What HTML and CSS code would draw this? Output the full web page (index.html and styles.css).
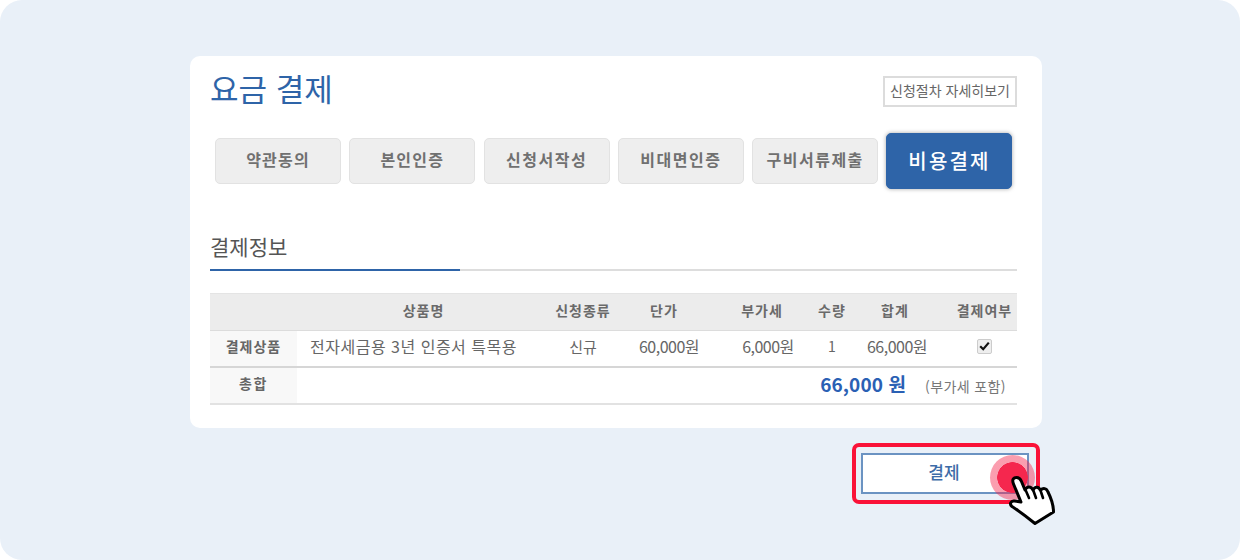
FILE: index.html
```html
<!DOCTYPE html>
<html lang="ko">
<head>
<meta charset="utf-8">
<title>요금 결제</title>
<link rel="stylesheet" href="styles.css">
</head>
<body>
<div class="stage">
  <main class="card">
    <header class="head">
      <h1 class="title">요금 결제</h1>
      <a class="guide">신청절차 자세히보기</a>
    </header>
    <nav class="steps">
      <span class="step">약관동의</span>
      <span class="step">본인인증</span>
      <span class="step wide">신청서작성</span>
      <span class="step wide">비대면인증</span>
      <span class="step wide">구비서류제출</span>
      <span class="step active">비용결제</span>
    </nav>
    <h2 class="section">결제정보</h2>
    <table class="pay">
      <colgroup>
        <col class="c1"><col class="c2"><col class="c3"><col class="c4"><col class="c5"><col class="c6"><col class="c7"><col class="c8">
      </colgroup>
      <thead>
        <tr><th></th><th>상품명</th><th>신청종류</th><th>단가</th><th>부가세</th><th>수량</th><th>합계</th><th class="last">결제여부</th></tr>
      </thead>
      <tbody>
        <tr class="item">
          <th class="label">결제상품</th>
          <td class="name">전자세금용 3년 인증서 특목용</td>
          <td class="small">신규</td>
          <td class="n1">60,000원</td>
          <td class="n2">6,000원</td>
          <td class="small one">1</td>
          <td class="n3">66,000원</td>
          <td class="last"><span class="check"><svg width="11" height="10" viewBox="0 0 11 10"><path d="M1.2 5.2 4.2 8.2 9.8 1.6" fill="none" stroke="#111" stroke-width="2.2"/></svg></span></td>
        </tr>
        <tr class="total">
          <th class="label">총합</th>
          <td colspan="7" class="sum"><strong>66,000 원</strong><span class="vat">(부가세 포함)</span></td>
        </tr>
      </tbody>
    </table>
  </main>
  <div class="action">
    <div class="focus"><button class="pay-btn">결제</button></div>
    <span class="ripple"></span>
    <svg class="hand" width="50" height="52" viewBox="0 0 50 52">
      <path d="M13 28 L5.5 10 C3.5 5 6 3.5 8.5 3.5 C11 3.5 12.5 5 13.5 7.5 L17 16 C19 12 23 12 25 16 C27 12 31 12.5 32.5 16.5 C35 13.5 38.5 14 40 18 C43.5 25 45.5 31 45.5 38 L27 49.5 C19 43 11 37 4 32.5 C1 30 3 26.5 6.5 27 Z" fill="#fff" stroke="#000" stroke-width="3" stroke-linejoin="round"/>
      <path d="M18 17 L21 24 M25.5 17 L28 24 M33 18 L35 24" fill="none" stroke="#000" stroke-width="2.6" stroke-linecap="round"/>
    </svg>
  </div>
</div>
</body>
</html>
```
FILE: styles.css
```css
* { box-sizing: border-box; }
html, body { margin: 0; padding: 0; background: #fff; }
body { width: 1240px; height: 560px; overflow: hidden; font-family: "Noto Sans CJK KR", "Noto Sans", sans-serif; }
.stage { width: 1240px; height: 560px; background: #e9f0f8; border-radius: 22px; padding: 56px 198px 0 190px; }
.card { width: 852px; height: 372px; background: #fff; border-radius: 10px; padding: 14px 25px 0 20px; }
.head { display: flex; justify-content: space-between; align-items: flex-start; height: 63px; }
.title { margin: -2px 0 0; font-size: 31px; line-height: 40px; font-weight: 400; color: #2e64a8; }
.guide { margin-top: 6px; width: 134px; height: 31px; border: 2px solid #dcdcdc; font-size: 14px; line-height: 25px; text-align: center; color: #666; white-space: nowrap; }
.steps { display: flex; gap: 8.3px; padding-left: 5px; align-items: center; height: 56px; }
.step { width: 126px; height: 46px; background: #eee; border: 1px solid #e2e2e2; border-radius: 5px; font-size: 16px; font-weight: 700; line-height: 40px; text-align: center; color: #707070; letter-spacing: 1.2px; white-space: nowrap; }
.step.wide { letter-spacing: 1.5px; }
.step.active { height: 56px; background: #2e64a8; border-color: #2e64a8; font-size: 20px; font-weight: 500; line-height: 54px; color: #fff; letter-spacing: 2.2px; box-shadow: 0 0 4px rgba(0,0,0,.35); }
.section { margin: 38px 0 0; height: 44px; border-bottom: 2px solid #ddd; font-size: 21px; line-height: 38px; font-weight: 400; color: #555; width: 807px; position: relative; }
.section::after { content: ""; position: absolute; left: 0; bottom: -2px; width: 250px; height: 2px; background: #2e64a8; }
.pay { margin-top: 22px; width: 807px; border-collapse: collapse; table-layout: fixed; }
.c1 { width: 87px; } .c2 { width: 253px; } .c3 { width: 66px; } .c4 { width: 96px; } .c5 { width: 100px; } .c6 { width: 40px; } .c7 { width: 86px; } .c8 { width: 79px; }
.pay th, .pay td { padding: 0 0 4px; text-align: center; white-space: nowrap; }
.pay thead th { height: 37px; padding-bottom: 5px; background: #ececec; border-top: 1px solid #e4e4e4; border-bottom: 1px solid #dcdcdc; font-size: 14px; font-weight: 700; color: #6a6a6a; letter-spacing: 1px; }
.pay .last { padding-left: 14px; }
.pay td { font-size: 16px; color: #666; letter-spacing: -0.5px; }
.pay td.name { text-align: left; padding-left: 13px; letter-spacing: 0.5px; }
.pay td.small { font-size: 15px; letter-spacing: 0; }
.pay td.one { font-size: 14px; }
.pay td.n1 { padding-left: 10px; }
.pay td.n2 { padding-left: 12px; }
.pay td.n3 { padding-left: 4px; }
.pay .label { background: #f8f8f8; font-size: 14px; font-weight: 700; color: #666; letter-spacing: 1px; }
.total .label { letter-spacing: 1.6px; }
.item th, .item td { height: 36px; border-bottom: 2px solid #d6d6d6; }
.total th, .total td { height: 37px; border-bottom: 2px solid #e2e2e2; }
.pay td.sum { text-align: right; padding-right: 11px; }
.sum strong { font-size: 19px; font-weight: 700; color: #2a60b4; letter-spacing: 0.1px; }
.vat { margin-left: 19px; font-size: 14px; color: #777; letter-spacing: 0.4px; }
.check { display: block; width: 15px; height: 15px; margin: 0 auto; background: #eee; border: 1px solid #ccc; border-radius: 2px; line-height: 0; padding: 1.5px 1px; }
.action { position: relative; width: 852px; margin-top: 15px; display: flex; justify-content: flex-end; }
.focus { width: 188px; height: 61px; margin-right: 2px; border: 4px solid #fa1238; border-radius: 7px; padding: 6px 7px 6px 5px; }
.pay-btn { display: block; width: 168px; height: 41px; background: #fff; border: 2px solid #6b93c2; font: 500 17px/1 "Noto Sans CJK KR", sans-serif; color: #3d6ca8; padding: 0 2px 5px 0; }
.ripple { position: absolute; left: 800px; top: 12px; width: 45px; height: 45px; border-radius: 50%; background: radial-gradient(circle, #f5274e 15px, rgba(245,39,78,.45) 15.5px); }
.hand { position: absolute; left: 818px; top: 31px; }
```
